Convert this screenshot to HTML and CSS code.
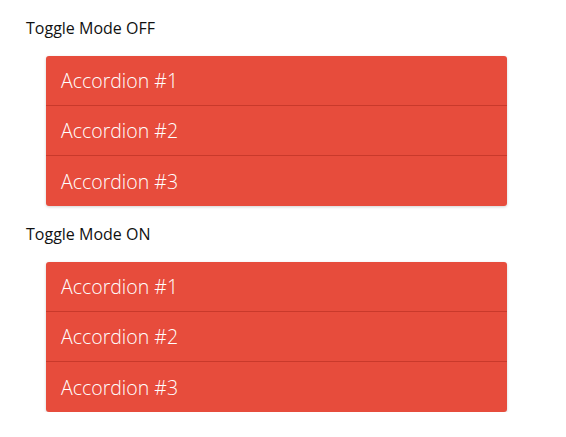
FILE: index.html
```html
<!DOCTYPE html>
<html lang="en">
  <head>
    <meta charset="utf-8" />
    <meta name="viewport" content="width=device-width, initial-scale=1" />
    <title>Accordion</title>
    <link rel="stylesheet" href="styles.css">
  </head>
  <body>
    <p class="mode">Toggle Mode OFF</p>
    <div class="accordion">
      <div class="item">Accordion #1</div>
      <div class="item">Accordion #2</div>
      <div class="item">Accordion #3</div>
    </div>

    <p class="mode">Toggle Mode ON</p>
    <div class="accordion toggle">
      <div class="item">Accordion #1</div>
      <div class="item">Accordion #2</div>
      <div class="item">Accordion #3</div>
    </div>
  </body>
</html>
```

FILE: styles.css
```css
* {
  margin: 0;
  padding: 0;
  box-sizing: border-box;
}
body {
  background: #fff;
  font-family: "Open Sans", "Liberation Sans", sans-serif;
  color: #111;
}
.mode {
  font-size: 16px;
  line-height: 22px;
  margin: 17px 0;
  padding-left: 26px;
}
.accordion {
  width: 461px;
  margin-left: 46px;
  background: #e74c3c;
  border-radius: 3px;
  box-shadow: 0 1px 3px rgba(0,0,0,0.18);
  overflow: hidden;
}
.item {
  height: 50px;
  display: flex;
  align-items: center;
  padding-left: 15px;
  color: #fff;
  font-size: 19.5px;
  font-weight: 350;
  border-bottom: 1px solid #c9392b;
}
.item:last-child {
  border-bottom: none;
}
```
